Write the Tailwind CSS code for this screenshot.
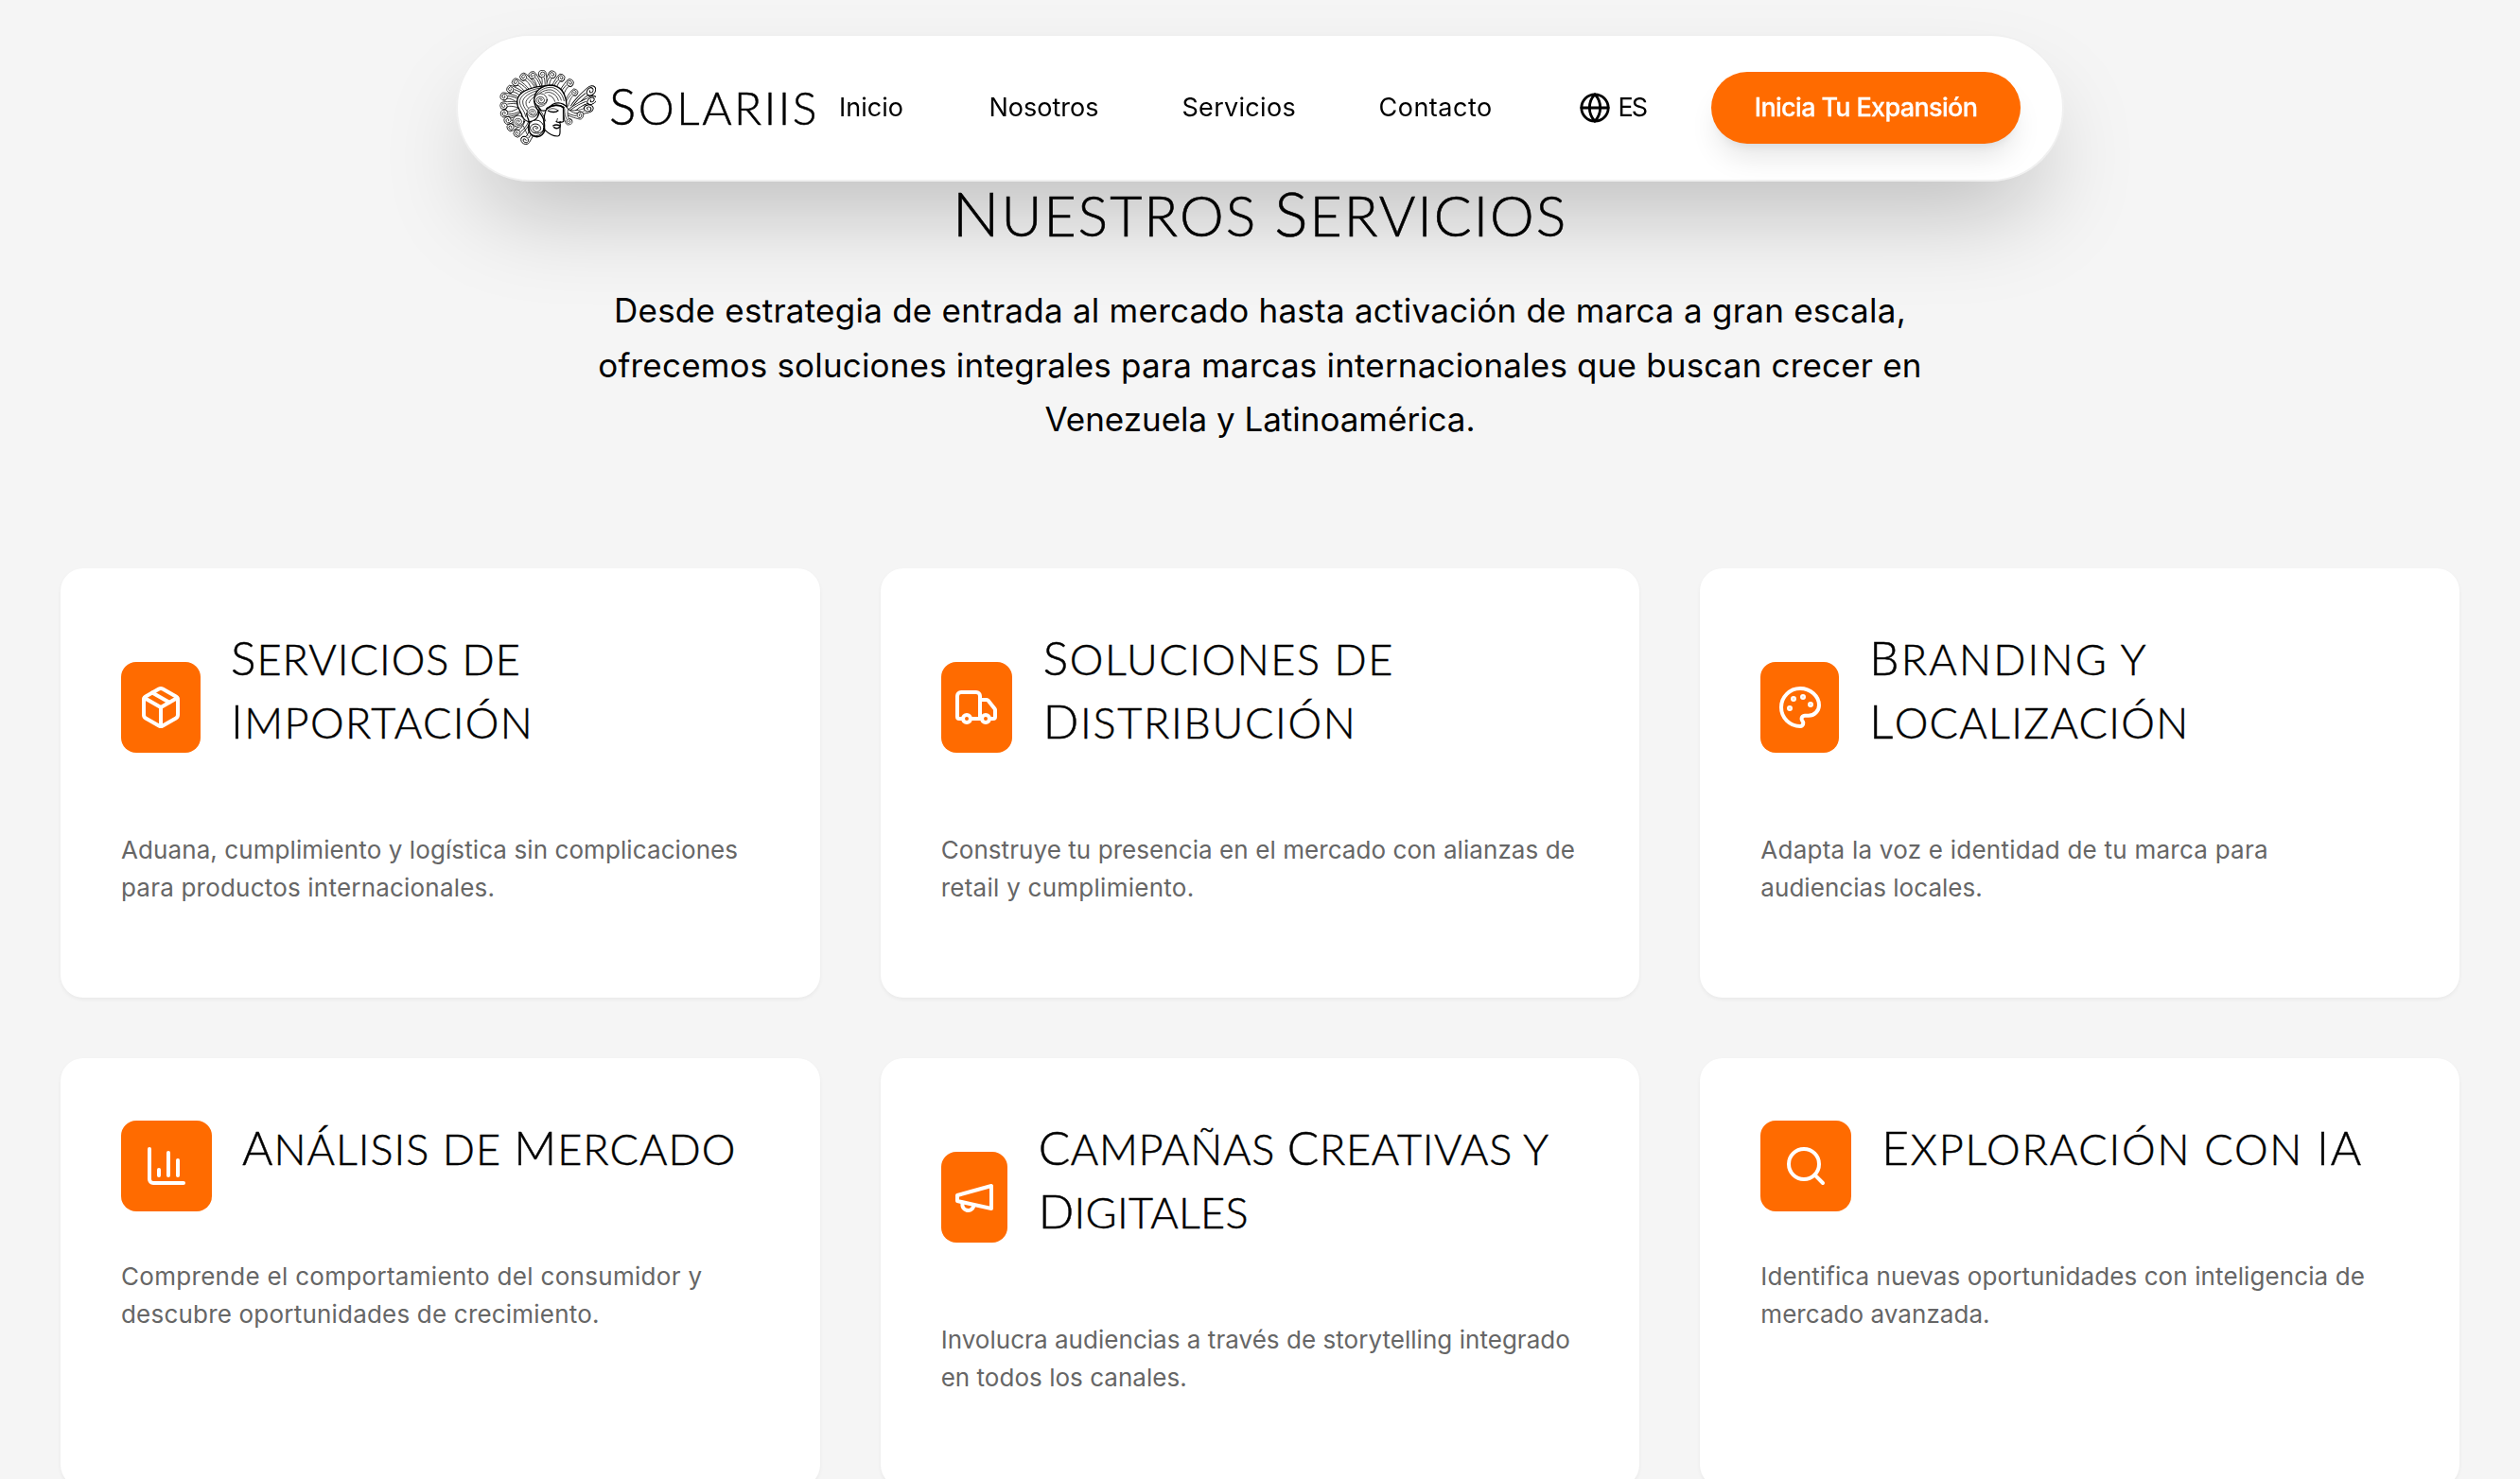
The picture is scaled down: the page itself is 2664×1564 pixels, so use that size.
<!DOCTYPE html>
<html lang="es">
<head>
<meta charset="utf-8">
<title>Solariis</title>
<script src="https://cdn.jsdelivr.net/npm/@tailwindcss/browser@4"></script>
</head>
<body class="h-[1564px] overflow-hidden bg-[#f5f5f5] font-['Inter',sans-serif] text-black">

<header class="fixed top-9 left-[482px] z-10 flex h-[156px] w-[1700px] items-center rounded-full border-2 border-[#f0f0f0] bg-white pl-11 text-[27px] whitespace-nowrap shadow-[0_50px_100px_-24px_rgba(0,0,0,0.25)]">
  <!-- Logo: head with curled hair -->
  <svg class="mr-[14px] h-20 w-[102px] shrink-0" viewBox="24 24 306 240" fill="none" stroke="#000" stroke-width="2.2" stroke-linecap="round" stroke-linejoin="round">
    <defs>
      <g id="curl">
        <path fill="#fff" d="M-8 52C-15 34-12 14-12 0A12 12 0 0 1 12 0A9.500 9.500 0 0 1 4 10C0 18 2 36 10 52"/>
        <path d="M12 0A10 10 0 0 1-8 1A7 7 0 0 1 6 0A4.500 4.500 0 0 1-2 1"/>
        <path d="M-3 52C-8 36-7 22-5 12"/>
      </g>
      <g id="coil">
        <circle r="20" fill="#fff"/>
        <path d="M20 0A18 18 0 0 1-15 0A14 14 0 0 1 12 0A10 10 0 0 1-8 0A7 7 0 0 1 5 0A4 4 0 0 1-1 1"/>
      </g>
    </defs>
    <use href="#curl" transform="translate(313 90) rotate(46) scale(1.150 1.500)"/>
    <use href="#curl" transform="translate(316 120) rotate(62) scale(1 1.500)"/>
    <use href="#curl" transform="translate(306 147) rotate(78) scale(-1 1.300)"/>
    <use href="#curl" transform="translate(279 168) rotate(108) scale(-1 .9)"/>
    <use href="#curl" transform="translate(244 188) rotate(165) scale(-.9 .8)"/>
    <use href="#curl" transform="translate(262 95) rotate(35) scale(.9)"/>
    <use href="#curl" transform="translate(247 65) rotate(35)"/>
    <use href="#curl" transform="translate(219 49) rotate(30)"/>
    <use href="#curl" transform="translate(191 39) rotate(22)"/>
    <use href="#curl" transform="translate(160 37) rotate(-4) scale(-1 1)"/>
    <use href="#curl" transform="translate(129 41) rotate(-28) scale(-1 1)"/>
    <use href="#curl" transform="translate(101 46) rotate(-42) scale(-1 1)"/>
    <use href="#curl" transform="translate(76 63) rotate(-50) scale(-1 1)"/>
    <use href="#curl" transform="translate(59 85) rotate(-62) scale(-1 1)"/>
    <use href="#curl" transform="translate(39 108) rotate(-74) scale(-1 1)"/>
    <use href="#curl" transform="translate(38 137) rotate(-90) scale(-1 1)"/>
    <use href="#curl" transform="translate(40 162) rotate(-102)"/>
    <use href="#curl" transform="translate(51 184) rotate(-114)"/>
    <use href="#curl" transform="translate(60 206) rotate(-124)"/>
    <use href="#curl" transform="translate(81 225) rotate(-140)"/>
    <use href="#curl" transform="translate(106 247) rotate(-152) scale(1.200 1)"/>
    <!-- Locks sweeping over the head -->
    <path fill="#fff" stroke-width="4" d="M172 74C120 78 84 94 80 122C78 146 92 152 96 170C110 200 150 190 150 150L176 100Z"/>
    <path d="M168 79C124 84 94 98 88 122C88 144 104 150 107 172M163 86C132 89 103 104 98 122C97 142 110 148 116 164M157 94C136 98 114 108 108 125C107 138 114 142 120 150M148 104C136 107 122 115 118 128"/>
    <path fill="#fff" stroke-width="4" d="M134 124C132 90 158 72 190 72C216 76 232 96 236 126L238 142C224 126 200 122 182 142C178 150 168 156 156 152Z"/>
    <path d="M141 104C154 84 172 79 190 79C210 84 224 100 229 122M152 98C164 89 176 86 188 87C204 92 215 104 220 120M168 97C176 94 184 94 190 97C202 102 208 110 211 121M180 104C190 106 197 114 200 124"/>
    <!-- Face -->
    <path fill="#fff" stroke-width="3.500" d="M176 144C196 132 216 134 227 142L228 186C226 190 220 190 215 190L217 198L216 210C216 220 218 234 208 234C192 234 180 226 168 214C162 196 164 162 176 144Z"/>
    <path stroke-width="5" d="M174 147C190 134 214 132 228 144"/>
    <path stroke-width="4" d="M178 153C190 160 204 158 210 153M204 187C206 192 214 190 218 189M194 201C202 196 210 198 216 201M197 206C204 211 210 210 215 205"/>
    <path d="M182 149C190 144 202 146 209 152M226 146V184M208 178L206 186"/>
    <!-- Inner coils -->
    <use href="#coil" transform="translate(155 119)"/>
    <use href="#coil" transform="translate(129 157) scale(.85)"/>
    <use href="#coil" transform="translate(84 187) scale(.9)"/>
    <use href="#coil" transform="translate(140 208) scale(1.250)"/>
    <path stroke-width="4" d="M135 124C134 146 158 160 164 182C168 196 168 208 164 218M110 162C112 180 122 184 118 200C114 222 126 238 146 236C156 234 164 226 168 216"/>
    <path d="M144 138C152 152 166 166 170 186M100 202C106 212 108 222 114 232"/>
  </svg>
  <span class="w-[243px] shrink-0 pb-px font-['Lato',sans-serif] text-[48px] font-light tracking-[2.5px] uppercase [-webkit-text-stroke:0.5px]"><span class="text-[53px] leading-none">S</span>olariis</span>
  <nav class="flex shrink-0">
    <a class="w-[158.500px]">Inicio</a>
    <a class="w-[204px]">Nosotros</a>
    <a class="w-[208px] tracking-[0.3px]">Servicios</a>
    <a class="w-[211px] tracking-[0.5px]">Contacto</a>
  </nav>
  <svg class="mr-2 size-[34px] shrink-0" viewBox="0 0 24 24" fill="none" stroke="currentColor" stroke-width="2" stroke-linecap="round" stroke-linejoin="round"><circle cx="12" cy="12" r="10"/><path d="M12 2a14.500 14.500 0 0 0 0 20 14.500 14.500 0 0 0 0-20"/><path d="M2 12h20"/></svg>
  <span class="w-[98.500px] shrink-0 tracking-[-2px]">ES</span>
  <button class="h-[76px] w-[327px] shrink-0 rounded-full bg-[#ff6b00] font-medium tracking-[-0.66px] text-white shadow-[0_20px_30px_-6px_rgba(0,0,0,0.1),0_8px_12px_-8px_rgba(0,0,0,0.1)] [-webkit-text-stroke:0.3px]">Inicia Tu Expansión</button>
</header>

<section class="px-16 pt-[188px]">
  <h2 class="text-center font-['Lato',sans-serif] text-[59px] leading-[80px] font-light tracking-[2px] uppercase [-webkit-text-stroke:0.6px]"><span class="text-[66px] leading-none">N</span>uestros <span class="text-[66px] leading-none">S</span>ervicios</h2>
  <p class="mt-8 text-center text-[35px] leading-[57.6px] tracking-[0.18px] whitespace-nowrap">
    <span class="block tracking-[0.25px]">Desde estrategia de entrada al mercado hasta activación de marca a gran escala,</span>
    <span class="block">ofrecemos soluciones integrales para marcas internacionales que buscan crecer en</span>
    <span class="block tracking-[-0.02px]">Venezuela y Latinoamérica.</span>
  </p>

  <div class="mt-32 grid grid-cols-3 gap-16">
    <article class="h-[454px] rounded-3xl bg-white p-16 shadow-[0_2px_4px_rgba(0,0,0,0.05)]">
      <div class="flex items-center gap-8">
        <div class="flex h-24 w-[84px] shrink-0 items-center justify-center rounded-2xl bg-[#ff6b00] text-white">
          <svg class="size-12 shrink-0" viewBox="0 0 24 24" fill="none" stroke="currentColor" stroke-width="2" stroke-linecap="round" stroke-linejoin="round"><path d="m7.500 4.270 9 5.150"/><path d="M21 8a2 2 0 0 0-1-1.730l-7-4a2 2 0 0 0-2 0l-7 4A2 2 0 0 0 3 8v8a2 2 0 0 0 1 1.730l7 4a2 2 0 0 0 2 0l7-4A2 2 0 0 0 21 16Z"/><path d="m3.300 7 8.700 5 8.700-5"/><path d="M12 22V12"/></svg>
        </div>
        <h3 class="-mt-px mb-[34px] font-['Lato',sans-serif] text-[45px] leading-[67.2px] font-light whitespace-nowrap uppercase [-webkit-text-stroke:0.5px]">
          <span class="block tracking-[1px]"><span class="text-[49.500px] leading-none">S</span>ervicios de</span>
          <span class="block tracking-[1.4px]"><span class="text-[49.500px] leading-none">I</span>mportación</span>
        </h3>
      </div>
      <p class="mt-[47px] text-[26px] leading-10 whitespace-nowrap text-[#666]">
        <span class="block tracking-[0.09px]">Aduana, cumplimiento y logística sin complicaciones</span>
        <span class="block tracking-[0.2px]">para productos internacionales.</span>
      </p>
    </article>

    <article class="h-[454px] rounded-3xl bg-white p-16 shadow-[0_2px_4px_rgba(0,0,0,0.05)]">
      <div class="flex items-center gap-8">
        <div class="flex h-24 w-[75px] shrink-0 items-center justify-center rounded-2xl bg-[#ff6b00] text-white">
          <svg class="size-12 shrink-0" viewBox="0 0 24 24" fill="none" stroke="currentColor" stroke-width="2" stroke-linecap="round" stroke-linejoin="round"><path d="M14 18V6a2 2 0 0 0-2-2H4a2 2 0 0 0-2 2v11a1 1 0 0 0 1 1h2"/><path d="M15 18H9"/><path d="M19 18h2a1 1 0 0 0 1-1v-3.650a1 1 0 0 0-.22-.624l-3.480-4.350A1 1 0 0 0 17.520 8H14"/><circle cx="17" cy="18" r="2"/><circle cx="7" cy="18" r="2"/></svg>
        </div>
        <h3 class="-mt-px mb-[34px] ml-px font-['Lato',sans-serif] text-[45px] leading-[67.2px] font-light whitespace-nowrap uppercase [-webkit-text-stroke:0.5px]">
          <span class="block tracking-[1.6px]"><span class="text-[49.500px] leading-none">S</span>oluciones de</span>
          <span class="block tracking-[1.7px]"><span class="text-[49.500px] leading-none">D</span>istribución</span>
        </h3>
      </div>
      <p class="mt-[47px] text-[26px] leading-10 whitespace-nowrap text-[#666]">
        <span class="block tracking-[0.07px]">Construye tu presencia en el mercado con alianzas de</span>
        <span class="block tracking-[0.26px]">retail y cumplimiento.</span>
      </p>
    </article>

    <article class="h-[454px] rounded-3xl bg-white p-16 shadow-[0_2px_4px_rgba(0,0,0,0.05)]">
      <div class="flex items-center gap-8">
        <div class="flex h-24 w-[83px] shrink-0 items-center justify-center rounded-2xl bg-[#ff6b00] text-white">
          <svg class="size-12 shrink-0" viewBox="0 0 24 24" fill="none" stroke="currentColor" stroke-width="2" stroke-linecap="round" stroke-linejoin="round"><circle cx="13.500" cy="6.500" r=".5" fill="currentColor"/><circle cx="17.500" cy="10.500" r=".5" fill="currentColor"/><circle cx="8.500" cy="7.500" r=".5" fill="currentColor"/><circle cx="6.500" cy="12.500" r=".5" fill="currentColor"/><path d="M12 2C6.500 2 2 6.500 2 12s4.500 10 10 10c.926 0 1.648-.746 1.648-1.688 0-.437-.18-.835-.437-1.125-.29-.289-.438-.652-.438-1.125a1.640 1.640 0 0 1 1.668-1.668h1.996c3.051 0 5.555-2.503 5.555-5.554C21.965 6.012 17.461 2 12 2z"/></svg>
        </div>
        <h3 class="-mt-px mb-[34px] font-['Lato',sans-serif] text-[45px] leading-[67.2px] font-light whitespace-nowrap uppercase [-webkit-text-stroke:0.5px]">
          <span class="block tracking-[2.2px]"><span class="text-[49.500px] leading-none">B</span>randing y</span>
          <span class="block tracking-[1.3px]"><span class="text-[49.500px] leading-none">L</span>ocalización</span>
        </h3>
      </div>
      <p class="mt-[47px] text-[26px] leading-10 whitespace-nowrap text-[#666]">
        <span class="block tracking-[0.24px]">Adapta la voz e identidad de tu marca para</span>
        <span class="block tracking-[0.04px]">audiencias locales.</span>
      </p>
    </article>

    <article class="h-[454px] rounded-3xl bg-white p-16 shadow-[0_2px_4px_rgba(0,0,0,0.05)]">
      <div class="flex items-center gap-8">
        <div class="flex size-24 shrink-0 items-center justify-center rounded-2xl bg-[#ff6b00] text-white">
          <svg class="size-12 shrink-0" viewBox="0 0 24 24" fill="none" stroke="currentColor" stroke-width="2" stroke-linecap="round" stroke-linejoin="round"><path d="M3 3v16a2 2 0 0 0 2 2h16"/><path d="M18 17V9"/><path d="M13 17V5"/><path d="M8 17v-3"/></svg>
        </div>
        <h3 class="-mt-px mb-[34px] font-['Lato',sans-serif] text-[45px] leading-[67.2px] font-light tracking-[1.020px] whitespace-nowrap uppercase [-webkit-text-stroke:0.5px]"><span class="text-[49.500px] leading-none">A</span>nálisis de <span class="text-[49.500px] leading-none">M</span>ercado</h3>
      </div>
      <p class="mt-[47px] text-[26px] leading-10 whitespace-nowrap text-[#666]">
        <span class="block tracking-[0.3px]">Comprende el comportamiento del consumidor y</span>
        <span class="block tracking-[0.2px]">descubre oportunidades de crecimiento.</span>
      </p>
    </article>

    <article class="h-[454px] rounded-3xl bg-white p-16 shadow-[0_2px_4px_rgba(0,0,0,0.05)]">
      <div class="flex items-center gap-8">
        <div class="flex h-24 w-[70px] shrink-0 items-center justify-center rounded-2xl bg-[#ff6b00] text-white">
          <svg class="size-12 shrink-0" viewBox="0 0 24 24" fill="none" stroke="currentColor" stroke-width="2" stroke-linecap="round" stroke-linejoin="round"><path d="m3 11 18-5v12L3 14v-3z"/><path d="M11.600 16.800a3 3 0 1 1-5.800-1.600"/></svg>
        </div>
        <h3 class="-mt-px mb-[34px] ml-px font-['Lato',sans-serif] text-[45px] leading-[67.2px] font-light whitespace-nowrap uppercase [-webkit-text-stroke:0.5px]">
          <span class="block tracking-[0.7px]"><span class="text-[49.500px] leading-none">C</span>ampañas <span class="text-[49.500px] leading-none">C</span>reativas y</span>
          <span class="block tracking-[0.3px]"><span class="text-[49.500px] leading-none">D</span>igitales</span>
        </h3>
      </div>
      <p class="mt-[47px] text-[26px] leading-10 whitespace-nowrap text-[#666]">
        <span class="block tracking-[0.04px]">Involucra audiencias a través de storytelling integrado</span>
        <span class="block tracking-[0.03px]">en todos los canales.</span>
      </p>
    </article>

    <article class="h-[454px] rounded-3xl bg-white p-16 shadow-[0_2px_4px_rgba(0,0,0,0.05)]">
      <div class="flex items-center gap-8">
        <div class="flex size-24 shrink-0 items-center justify-center rounded-2xl bg-[#ff6b00] text-white">
          <svg class="size-12 shrink-0" viewBox="0 0 24 24" fill="none" stroke="currentColor" stroke-width="2" stroke-linecap="round" stroke-linejoin="round"><circle cx="11" cy="11" r="8"/><path d="m21 21-4.300-4.300"/></svg>
        </div>
        <h3 class="-mt-px mb-[34px] font-['Lato',sans-serif] text-[45px] leading-[67.2px] font-light tracking-[1.8px] whitespace-nowrap uppercase [-webkit-text-stroke:0.5px]"><span class="text-[49.500px] leading-none">E</span>xploración con <span class="text-[49.500px] leading-none">IA</span></h3>
      </div>
      <p class="mt-[47px] text-[26px] leading-10 whitespace-nowrap text-[#666]">
        <span class="block tracking-[0.1px]">Identifica nuevas oportunidades con inteligencia de</span>
        <span class="block tracking-[0.05px]">mercado avanzada.</span>
      </p>
    </article>
  </div>
</section>
</body>
</html>
